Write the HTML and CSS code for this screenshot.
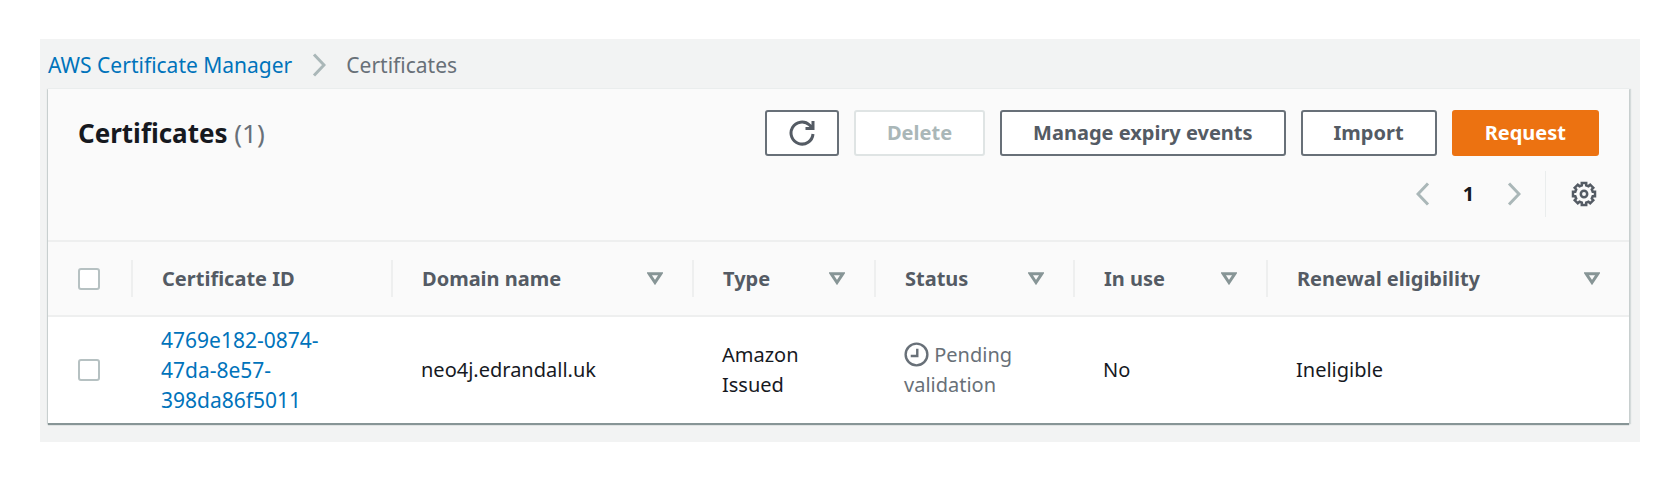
FILE: index.html
```html
<!DOCTYPE html>
<html lang="en">
<head>
<meta charset="utf-8">
<title>Certificates</title>
<link rel="stylesheet" href="styles.css">
</head>
<body>
<main class="page">
  <nav class="breadcrumb" aria-label="Breadcrumb">
    <a class="link" href="#">AWS Certificate Manager</a>
    <svg class="chevron" viewBox="0 0 14 24" aria-hidden="true"><path d="M2 1.500L12 12L2 22.500"/></svg>
    <span>Certificates</span>
  </nav>
  <section class="panel">
    <header class="panel-header">
      <div class="toolbar">
        <h1 class="title">Certificates <span class="count">(1)</span></h1>
        <div class="actions">
          <button class="btn btn-icon" type="button" aria-label="Refresh">
            <svg class="icon" viewBox="0 0 26 26" aria-hidden="true"><path d="M24 14A11 11 0 1 1 20.500 5L23.500 8M24 1V8.500H16.500"/></svg>
          </button>
          <button class="btn" type="button" disabled>Delete</button>
          <button class="btn" type="button">Manage expiry events</button>
          <button class="btn" type="button">Import</button>
          <button class="btn btn-primary" type="button">Request</button>
        </div>
      </div>
      <div class="tools">
        <button class="plain" type="button" aria-label="Previous page">
          <svg class="chevron" viewBox="0 0 14 24" aria-hidden="true"><path d="M12 1.500L2 12L12 22.500"/></svg>
        </button>
        <button class="plain page-number" type="button" aria-current="page">1</button>
        <button class="plain" type="button" aria-label="Next page">
          <svg class="chevron" viewBox="0 0 14 24" aria-hidden="true"><path d="M2 1.500L12 12L2 22.500"/></svg>
        </button>
        <button class="plain settings" type="button" aria-label="Preferences">
          <svg class="icon gear" viewBox="0 0 26 26" aria-hidden="true"><path d="M10.800 2H15.200V4.300L17.500 5.200L19.200 3.700L22.300 6.800L20.800 8.500L21.700 10.800H24V15.200H21.700L20.800 17.500L22.300 19.200L19.200 22.300L17.500 20.800L15.200 21.700V24H10.800V21.700L8.500 20.800L6.800 22.300L3.700 19.200L5.200 17.500L4.300 15.200H2V10.800H4.300L5.200 8.500L3.700 6.800L6.800 3.700L8.500 5.200L10.800 4.300Z"/><circle cx="13" cy="13" r="3.200"/></svg>
        </button>
      </div>
    </header>
    <table class="table">
      <colgroup>
        <col class="c-select"><col class="c-id"><col class="c-domain"><col class="c-type"><col class="c-status"><col class="c-use"><col>
      </colgroup>
      <thead>
        <tr>
          <th class="select" scope="col"><input class="check" type="checkbox" aria-label="Select all certificates"></th>
          <th scope="col"><div class="head">Certificate ID</div></th>
          <th scope="col"><div class="head">Domain name <svg class="sort" viewBox="0 0 16 13" aria-hidden="true"><path d="M2.200 1.800H13.800L8 10.500Z"/></svg></div></th>
          <th scope="col"><div class="head">Type <svg class="sort" viewBox="0 0 16 13" aria-hidden="true"><path d="M2.200 1.800H13.800L8 10.500Z"/></svg></div></th>
          <th scope="col"><div class="head">Status <svg class="sort" viewBox="0 0 16 13" aria-hidden="true"><path d="M2.200 1.800H13.800L8 10.500Z"/></svg></div></th>
          <th scope="col"><div class="head">In use <svg class="sort" viewBox="0 0 16 13" aria-hidden="true"><path d="M2.200 1.800H13.800L8 10.500Z"/></svg></div></th>
          <th scope="col"><div class="head">Renewal eligibility <svg class="sort" viewBox="0 0 16 13" aria-hidden="true"><path d="M2.200 1.800H13.800L8 10.500Z"/></svg></div></th>
        </tr>
      </thead>
      <tbody>
        <tr>
          <td class="select"><input class="check" type="checkbox" aria-label="Select certificate 4769e182"></td>
          <td class="cert-id"><a class="link" href="#">4769e182-0874-47da-8e57-398da86f5011</a></td>
          <td>neo4j.edrandall.uk</td>
          <td>Amazon Issued</td>
          <td class="pending"><svg class="clock" viewBox="0 0 26 26" aria-hidden="true"><circle cx="13" cy="13" r="11.300"/><path d="M13.800 7V14.500H7"/></svg> Pending validation</td>
          <td>No</td>
          <td>Ineligible</td>
        </tr>
      </tbody>
    </table>
  </section>
</main>
</body>
</html>
```
FILE: styles.css
```css
* { box-sizing: border-box; }

body {
  margin: 0;
  background: #fff;
  color: #16191f;
  font: 20px/30px "Noto Sans", "Open Sans", sans-serif;
}

.page {
  margin: 39px 40px;
  padding: 0 11px 19px 8px;
  background: #f2f3f3;
}

.link { color: #0073bb; text-decoration: none; }

.breadcrumb {
  display: flex;
  align-items: center;
  gap: 20px;
  height: 49px;
  padding-top: 2px;
  color: #687078;
  font-size: 21px;
}

.chevron {
  display: block;
  width: 14px;
  height: 24px;
  fill: none;
  stroke: #aab7b8;
  stroke-width: 3;
}

.panel {
  background: #fff;
  border-top: 1px solid #eaeded;
  box-shadow: 0 2px 1px #879596, 2px 1px 1px #d5dbdb, -1px 1px 1px #d5dbdb;
}

.panel-header {
  padding: 21px 30px 23px;
  background: #fafafa;
  border-bottom: 2px solid #eeefef;
}

.toolbar {
  display: flex;
  align-items: center;
  justify-content: space-between;
}

.title { margin: 0; font-size: 26px; line-height: 32px; font-weight: 700; }
.count { color: #687078; font-weight: 400; }

.actions { display: flex; gap: 15px; }

.btn {
  height: 46px;
  padding: 0 31px;
  background: #fff;
  border: 2px solid #687078;
  border-radius: 3px;
  color: #545b64;
  font: inherit;
  font-weight: 700;
}

.btn:disabled { border-color: #dfe4e4; color: #aab7b8; }
.btn-primary { background: #ec7211; border-color: #ec7211; color: #fff; }
.btn-icon { padding: 0 22px; }

.icon {
  display: block;
  width: 26px;
  height: 26px;
  fill: none;
  stroke: #545b64;
  stroke-width: 3;
}

.gear { stroke-width: 2.5; }

.tools {
  display: flex;
  align-items: center;
  justify-content: flex-end;
  margin-top: 15px;
}

.plain {
  padding: 0;
  background: none;
  border: 0;
  color: #16191f;
  font: inherit;
}

.page-number { width: 77px; font-weight: 700; }

.settings {
  margin-left: 24px;
  padding: 10px 2px 10px 25px;
  border-left: 1px solid #eaeded;
}

.table {
  width: 100%;
  border-collapse: collapse;
  table-layout: fixed;
}

.c-select { width: 83px; }
.c-id { width: 260px; }
.c-domain { width: 301px; }
.c-type { width: 182px; }
.c-status { width: 199px; }
.c-use { width: 193px; }

th {
  padding: 18px 0;
  background: #fafafa;
  border-bottom: 2px solid #eeefef;
  color: #545b64;
  font-weight: 700;
  text-align: left;
}

th.select, td.select { padding-left: 30px; }

.head {
  display: flex;
  align-items: center;
  justify-content: space-between;
  height: 37px;
  padding: 0 29px;
  border-left: 2px solid #eeefef;
}

td { padding: 8px 30px; }

.cert-id { font-size: 21px; }

.check {
  display: block;
  appearance: none;
  width: 22px;
  height: 22px;
  margin: 0;
  background: #fff;
  border: 2px solid #b6c1c2;
  border-radius: 3px;
}

.sort {
  width: 16px;
  height: 13px;
  fill: none;
  stroke: #879596;
  stroke-width: 3;
}

.pending { color: #687078; }

.clock {
  width: 25px;
  height: 25px;
  fill: none;
  stroke: #687078;
  stroke-width: 2.500;
  vertical-align: -5px;
}
```
